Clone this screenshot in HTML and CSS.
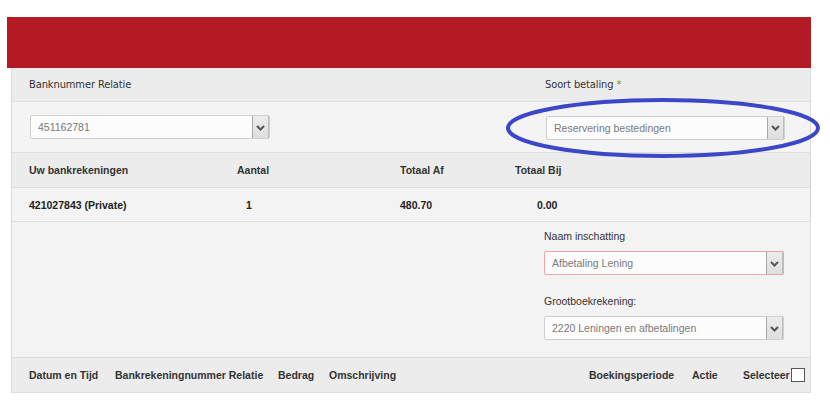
FILE: index.html
```html
<!DOCTYPE html>
<html>
<head>
<meta charset="utf-8">
<link rel="stylesheet" href="styles.css">
</head>
<body>
<div class="page">
  <div class="banner"></div>
  <div class="panel">
    <div class="row labels">
      <div class="top-label">Banknummer Relatie</div>
      <div class="top-label">Soort betaling <span class="req">*</span></div>
    </div>
    <div class="row selects">
      <div class="select sel-left"><span class="sel-text">451162781</span><span class="arrow"><svg width="9" height="6" viewBox="0 0 9 6"><path d="M1 1 L4.5 4.5 L8 1" fill="none" stroke="#555" stroke-width="2"/></svg></span></div>
      <div class="select sel-right"><span class="sel-text">Reservering bestedingen</span><span class="arrow"><svg width="9" height="6" viewBox="0 0 9 6"><path d="M1 1 L4.5 4.5 L8 1" fill="none" stroke="#555" stroke-width="2"/></svg></span></div>
    </div>
    <div class="row thead accounts">
      <div>Uw bankrekeningen</div>
      <div>Aantal</div>
      <div>Totaal Af</div>
      <div>Totaal Bij</div>
    </div>
    <div class="row tbody accounts">
      <div>421027843 (Private)</div>
      <div class="c-aantal">1</div>
      <div>480.70</div>
      <div class="c-bij">0.00</div>
    </div>
    <div class="row form">
      <div class="field">
        <div class="f-label">Naam inschatting</div>
        <div class="select error"><span class="sel-text">Afbetaling Lening</span><span class="arrow"><svg width="9" height="6" viewBox="0 0 9 6"><path d="M1 1 L4.5 4.5 L8 1" fill="none" stroke="#555" stroke-width="2"/></svg></span></div>
      </div>
      <div class="field">
        <div class="f-label">Grootboekrekening:</div>
        <div class="select"><span class="sel-text">2220 Leningen en afbetalingen</span><span class="arrow"><svg width="9" height="6" viewBox="0 0 9 6"><path d="M1 1 L4.5 4.5 L8 1" fill="none" stroke="#555" stroke-width="2"/></svg></span></div>
      </div>
    </div>
    <div class="row thead trans">
      <div>Datum en Tijd</div>
      <div>Bankrekeningnummer Relatie</div>
      <div>Bedrag</div>
      <div>Omschrijving</div>
      <div>Boekingsperiode</div>
      <div>Actie</div>
      <div class="sel-col">Selecteer<span class="checkbox"></span></div>
    </div>
  </div>
  <svg class="annot" width="318" height="64" viewBox="0 0 318 64"><ellipse cx="159" cy="32" rx="155" ry="28" fill="none" stroke="#3c46c8" stroke-width="4"/></svg>
</div>
</body>
</html>
```

FILE: styles.css
```css
* { box-sizing: border-box; }
html, body { margin: 0; padding: 0; background: #fff; }
body { font-family: "Liberation Sans", Arial, sans-serif; font-size: 10.5px; color: #333; }

.page { position: relative; margin: 17px 0 0 7px; width: 804px; }
.banner { height: 51px; background: #b41a24; }

.panel { margin-left: 4px; width: 800px; border-left: 1px solid #dcdcdc; border-right: 1px solid #dcdcdc; }

.row { border-bottom: 1px solid #dedede; }

.labels { display: grid; grid-template-columns: 516px 1fr; height: 34px; align-items: center; padding-left: 17px; background: #ececec; }
.top-label { font-family: "DejaVu Sans Condensed", "DejaVu Sans", sans-serif; font-stretch: condensed; font-size: 11px; color: #333; letter-spacing: -0.1px; }
.req { color: #5a9a3c; }

.selects { display: grid; grid-template-columns: 516px 1fr; height: 51px; align-items: center; padding-left: 18px; background: #f5f4f5; }
.sel-left { width: 240px; }
.sel-right { width: 239px; margin-top: 1px; }

.select { display: flex; height: 24px; border: 1px solid #cfcfcf; border-radius: 2px; background: #fcfcfc; }
.sel-text { flex: 1; padding-left: 7px; line-height: 22px; color: #7a7a7a; font-size: 10.5px; }
.arrow { width: 17px; display: flex; align-items: center; justify-content: center; background: linear-gradient(#ececec, #dedede); border-left: 1px solid #a9a9a9; border-right: 1px solid #bdbdbd; padding-top: 1px; }

.thead { background: #ececec; font-weight: bold; color: #333; }
.tbody { background: #f3f3f3; font-weight: bold; color: #222; }

.accounts { display: grid; grid-template-columns: 208px 163px 115px 1fr; align-items: center; padding-left: 17px; height: 35px; margin-right: -1px; border-right: 1px solid #d6d6d6; }
.tbody.accounts { height: 34px; }
.c-aantal { padding-left: 9px; }
.c-bij { padding-left: 22px; }

.form { background: #f3f3f3; height: 136px; padding: 7px 0 0 532px; }
.field { width: 240px; }
.f-label { color: #333; line-height: 14px; margin-bottom: 8px; }
.field .select { height: 24px; margin-bottom: 19px; }
.select.error { border-color: #f2a5a5; }

.trans { display: grid; grid-template-columns: 86px 163px 51px 260px 103px 51px 1fr; align-items: center; height: 35px; padding-left: 17px; }
.sel-col { display: flex; align-items: center; }
.checkbox { display: inline-block; width: 14px; height: 14px; border: 1px solid #555; background: #fff; margin-left: 1px; }

.annot { position: absolute; left: 497px; top: 79px; }
```
